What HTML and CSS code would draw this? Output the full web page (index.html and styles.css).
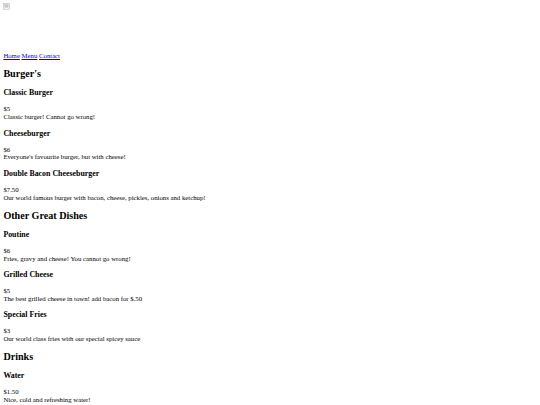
FILE: index.html
```html
<!DOCTYPE html>
<html>
<head>
<meta charset="utf-8">
<title>Menu</title>
<link rel="stylesheet" href="styles.css">
</head>
<body class="page">
<div class="header">
<svg class="broken" width="7" height="7" viewBox="0 0 16 16"><rect x="0.5" y="0.5" width="15" height="15" fill="#f4f4f4" stroke="#a8a8a8"/><rect x="3" y="3" width="10" height="6" fill="#c8c8c8"/><path d="M3 12 L7 9 L10 11 L13 9" stroke="#9a9a9a" fill="none"/></svg>
</div>
<nav class="nav"><a href="#">Home</a> <a href="#">Menu</a> <a href="#">Contact</a></nav>
<h2 class="section">Burger's</h2>
<h3 class="item">Classic Burger</h3>
<p class="desc">$5<br>Classic burger! Cannot go wrong!</p>
<h3 class="item">Cheeseburger</h3>
<p class="desc">$6<br>Everyone's favourite burger, but with cheese!</p>
<h3 class="item">Double Bacon Cheeseburger</h3>
<p class="desc">$7.50<br>Our world famous burger with bacon, cheese, pickles, onions and ketchup!</p>
<h2 class="section">Other Great Dishes</h2>
<h3 class="item">Poutine</h3>
<p class="desc">$6<br>Fries, gravy and cheese! You cannot go wrong!</p>
<h3 class="item">Grilled Cheese</h3>
<p class="desc">$5<br>The best grilled cheese in town! add bacon for $.50</p>
<h3 class="item">Special Fries</h3>
<p class="desc">$3<br>Our world class fries with our special spicey sauce</p>
<h2 class="section">Drinks</h2>
<h3 class="item">Water</h3>
<p class="desc">$1.50<br>Nice, cold and refreshing water!</p>
</body>
</html>
```
FILE: styles.css
```css
html {
  background: #fff;
}
.page {
  margin: 3.375px;
  font-family: "Liberation Serif", "Times New Roman", serif;
  font-size: 6.75px;
  line-height: 1.15;
  color: #000;
}
.header {
  height: 48.7px;
}
.broken {
  display: block;
  width: 6.75px;
  height: 6.75px;
}
.nav a {
  color: #0000ee;
  text-decoration: underline;
}
.section {
  font-size: 1.5em;
  font-weight: bold;
  margin: 0.83em 0;
}
.item {
  font-size: 1.17em;
  font-weight: bold;
  margin: 1em 0;
}
.desc {
  margin: 1em 0;
}
```
